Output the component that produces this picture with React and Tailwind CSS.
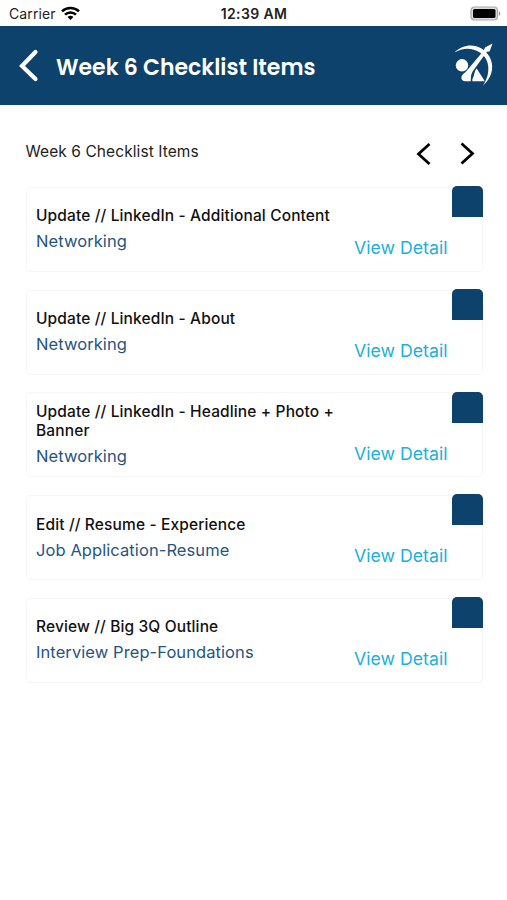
const items = [
  { title: 'Update // LinkedIn - Additional Content', category: 'Networking' },
  { title: 'Update // LinkedIn - About', category: 'Networking' },
  { title: 'Update // LinkedIn - Headline + Photo + Banner', category: 'Networking' },
  { title: 'Edit // Resume - Experience', category: 'Job Application-Resume' },
  { title: 'Review // Big 3Q Outline', category: 'Interview Prep-Foundations' },
];

function Wifi() {
  return (
    <svg className="h-[15px] w-[19px]" viewBox="0 0 19 15" fill="none" stroke="#000" strokeWidth="2.5">
      <path d="M1 5.3C5.7.8 13.3.8 18 5.3" />
      <path d="M4 8.6c3-2.9 8-2.9 11 0" />
      <path d="M6.6 10.9c1.6-1.4 4.2-1.4 5.8 0L9.5 14Z" fill="#000" stroke="none" />
    </svg>
  );
}

function Battery() {
  return (
    <svg className="h-[15px] w-[32px]" viewBox="0 0 32 15">
      <rect x="1" y="1" width="26.5" height="13" rx="3.5" fill="#ddd" stroke="#aaa" strokeWidth="1.2" />
      <rect x="3" y="3" width="22.5" height="9" rx="1.5" fill="#000" />
      <path d="M28.8 5.2c2 .7 2 3.9 0 4.6Z" fill="#999" />
    </svg>
  );
}

function Logo() {
  return (
    <svg className="h-[42px] w-[42px] overflow-visible" viewBox="0 0 42 42" fill="#fff">
      <path d="M2.5 8.5C10 1 21 -.5 29.5 4.5 42.5 12.5 44.5 30 31 41.5 38.5 30.5 39 15.5 27.5 8.2 20 3.5 10.5 3.5 2.5 8.5Z" />
      <circle cx="10" cy="21.3" r="6.2" />
      <path d="M40.5 -.5 37.600 7.5l-2.700 .3L23.500 23.500c-2.500 3-4 5.500-4.500 8.500l-.3 5.200h-5.500c-4 0-4.700-4-2.700-6.500 1.500-1.700 3.500-2.700 5.500-5.500L31.800 6.500l1.200-3Z" />
      <path d="M24.700 24.500 32.800 37.200H20.400c-.5-2 .8-3.500 1.500-5.700.8-2.500.8-5.300 2.800-7Z" />
    </svg>
  );
}

function Card({ title, category }) {
  return (
    <li className="flex h-[85px] rounded-[4px] border border-[#f6f6f6] bg-white">
      <div className="flex w-[326px] flex-col justify-center pl-[9.5px]">
        <h2 className="w-[306px] text-[15.5px] leading-[19px] font-medium tracking-[0.13px] text-[#111]">{title}</h2>
        <p className="mt-[5px] text-[16.5px] leading-[22px] tracking-[0.08px] text-[#275581]">{category}</p>
      </div>
      <div className="-mt-[1.8px] -mr-px flex flex-1 flex-col items-end">
        <span className="h-[31px] w-[31px] rounded-t-[5px] bg-[#0d426c]" />
        <a className="mt-[19px] mr-[35.5px] text-[17.7px] leading-[24px] whitespace-nowrap text-[#20b0dc]">View Detail</a>
      </div>
    </li>
  );
}

export default function App() {
  return (
    <div className="min-h-[900px] w-[507px] bg-white font-['Inter','Liberation_Sans',sans-serif]">
      <div className="grid h-[25.5px] grid-cols-3 items-center pt-[0.5px] pr-[5px] pl-[9px] text-[#222]">
        <div className="flex items-center gap-[5px] text-[14px]">
          <span className="tracking-[0.1px]">Carrier</span>
          <Wifi />
        </div>
        <span className="-ml-[3px] pt-px text-center text-[14px] font-semibold tracking-[0.35px]">12:39 AM</span>
        <div className="flex justify-end"><Battery /></div>
      </div>
      <header className="flex h-[79px] items-center bg-[#0d426c] pt-[0.5px] pr-[13px] pl-[18px] text-white">
        <svg className="h-[34px] w-[22px]" viewBox="0 0 22 34" fill="none" stroke="#fff" strokeWidth="4.2" strokeLinecap="round" strokeLinejoin="miter">
          <path d="M17.5 4 4 18l13.500 13" />
        </svg>
        <h1 className="ml-[16px] pt-[4px] font-['Poppins','Inter',sans-serif] text-[22px] font-semibold">Week 6 Checklist Items</h1>
        <div className="ml-auto"><Logo /></div>
      </header>
      <main className="pr-[24px] pl-[25.5px]">
        <div className="flex h-[82.4px] items-center pt-[12px]">
          <p className="text-[15.5px] tracking-[0.08px] text-[#222]">Week 6 Checklist Items</p>
          <div className="mt-[4px] mr-[8px] ml-auto flex gap-[29px]">
            <svg className="h-[24px] w-[15px]" viewBox="0 0 15 24" fill="none" stroke="#000" strokeWidth="2.8">
              <path d="M13.5 2 2.500 12l11 10" />
            </svg>
            <svg className="h-[24px] w-[15px]" viewBox="0 0 15 24" fill="none" stroke="#000" strokeWidth="2.8">
              <path d="M1.5 1.5 12.500 11.500l-11 10" />
            </svg>
          </div>
        </div>
        <ul className="flex flex-col gap-[17.75px]">
          {items.map((item) => (
            <Card key={item.title} {...item} />
          ))}
        </ul>
      </main>
    </div>
  );
}
